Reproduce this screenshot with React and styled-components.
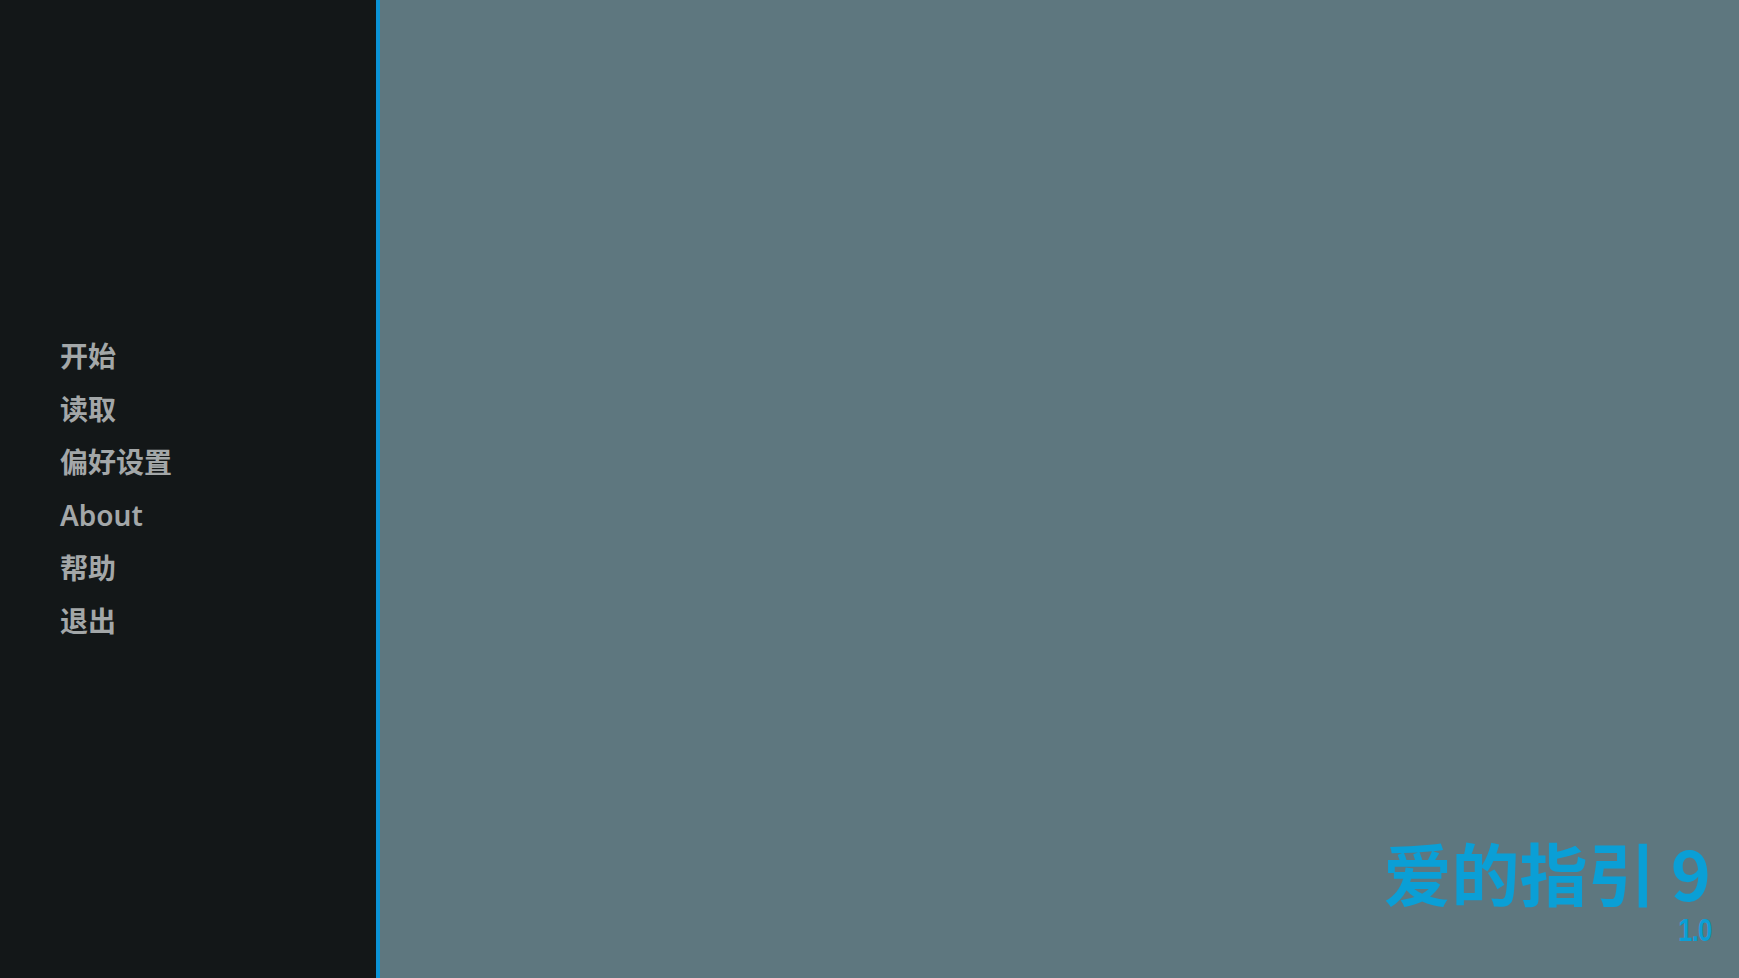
import React from 'react'
import styled, { createGlobalStyle } from 'styled-components'

const GlobalStyle = createGlobalStyle`
    html, body, #root {
        margin: 0;
        padding: 0;
        width: 100%;
        height: 100%;
    }
    body {
        overflow: hidden;
        font-family: 'Noto Sans', 'Noto Sans CJK SC', sans-serif;
    }
`

const Main = styled.div`
    width: 100vw;
    height: 100vh;
    display: flex;
    background-color: #5e777f;
`
const Sidebar = styled.nav`
    width: 380px;
    flex-shrink: 0;
    height: 100%;
    box-sizing: border-box;
    background-color: #131718;
    border-right: 4px solid #0b93d6;
    display: flex;
    flex-direction: column;
    justify-content: center;
    padding-left: 60px;
    padding-bottom: 1px;
`
const MenuItem = styled.a`
    display: block;
    height: 53px;
    line-height: 53px;
    font-size: 28px;
    font-weight: 600;
    color: #a3a7a8;
    font-family: 'Noto Sans', 'Noto Sans CJK SC', sans-serif;
    cursor: pointer;
    :hover {
        color: #ffffff;
    }
`
const Stage = styled.main`
    flex: 1;
    display: flex;
    flex-direction: column;
    justify-content: flex-end;
    align-items: flex-end;
    padding: 0 28px 32px 0;
`
const Title = styled.div`
    font-family: 'Noto Sans CJK SC', sans-serif;
    font-size: 68px;
    font-weight: 700;
    line-height: 68px;
    color: #0a9fd6;
    white-space: pre;
`
const Version = styled.div`
    margin-top: 8px;
    font-family: 'Liberation Sans', sans-serif;
    font-size: 32px;
    font-weight: 700;
    line-height: 32px;
    letter-spacing: -1px;
    color: #0a9fd6;
    transform: scaleX(0.8);
    transform-origin: right center;
`

const menuItems = ['开始', '读取', '偏好设置', 'About', '帮助', '退出']

const App = () => {
    return (
        <Main>
            <GlobalStyle />
            <Sidebar>
                {menuItems.map((item) => (
                    <MenuItem key={item}>{item}</MenuItem>
                ))}
            </Sidebar>
            <Stage>
                <Title>爱的指引 9</Title>
                <Version>1.0</Version>
            </Stage>
        </Main>
    )
}

export default App
